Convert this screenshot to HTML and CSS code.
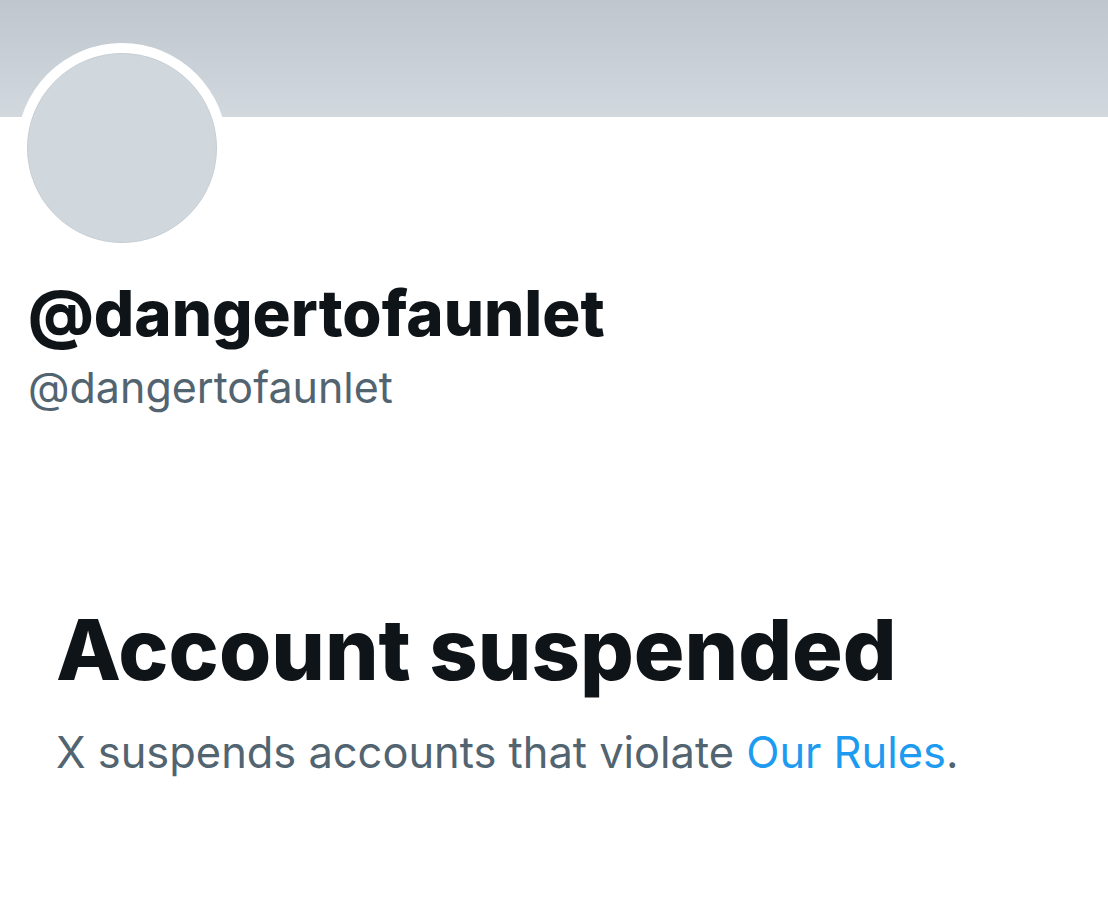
FILE: index.html
```html
<!DOCTYPE html>
<html lang="en">
<head>
<meta charset="utf-8">
<title>@dangertofaunlet</title>
<link rel="stylesheet" href="styles.css">
</head>
<body>
<div class="profile">
  <div class="banner"></div>
  <div class="header">
    <div class="avatar-ring"><div class="avatar"></div></div>
    <h1 class="display-name">@dangertofaunlet</h1>
    <div class="handle">@dangertofaunlet</div>
  </div>
  <section class="notice">
    <h2 class="notice-title">Account suspended</h2>
    <p class="notice-text">X suspends accounts that violate <a href="#" class="link">Our Rules</a>.</p>
  </section>
</div>
</body>
</html>
```

FILE: styles.css
```css
* { box-sizing: border-box; }

html, body {
  margin: 0;
  padding: 0;
  background: #ffffff;
}

body {
  font-family: Inter, "Noto Sans", sans-serif;
  color: #0f1419;
  width: 1108px;
  height: 919px;
  overflow: hidden;
}

.banner {
  height: 117px;
  background: linear-gradient(to bottom, #bfc6cd 0%, #d1d8de 100%);
}

.header {
  padding: 0 28px;
}

.avatar-ring {
  width: 210px;
  height: 210px;
  margin-top: -74px;
  margin-left: -11px;
  border-radius: 50%;
  background: #ffffff;
  padding: 10px;
  position: relative;
}

.avatar {
  width: 190px;
  height: 190px;
  border-radius: 50%;
  background: #d0d8de;
  border: 1px solid #c6ced4;
}

.display-name {
  margin: 24px 0 0;
  font-size: 63.5px;
  font-weight: 800;
  line-height: 72px;
}

.handle {
  margin-top: 14px;
  font-size: 43px;
  font-weight: 400;
  line-height: 48px;
  color: #536471;
}

.notice {
  padding: 190px 56px 0;
}

.notice-title {
  margin: 0;
  font-size: 84.5px;
  font-weight: 800;
  line-height: 96px;
}

.notice-text {
  margin: 29px 0 0;
  font-size: 43.4px;
  line-height: 52px;
  color: #536471;
}

.link {
  color: #1d9bf0;
  text-decoration: none;
}
```
